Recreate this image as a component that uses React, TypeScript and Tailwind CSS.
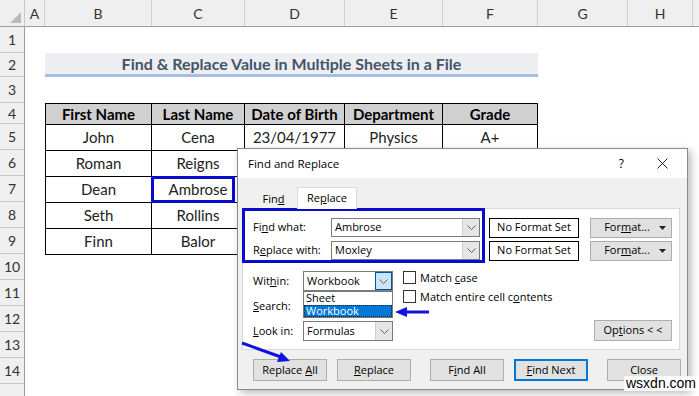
import React from "react";

const sheetFont = { fontFamily: "Lato, 'Liberation Sans', sans-serif" };
const uiFont = { fontFamily: "'Open Sans', 'Noto Sans', sans-serif" };

const cols = [
  { l: "A", w: "w-[20px]" },
  { l: "B", w: "w-[107px]" },
  { l: "C", w: "w-[93px]" },
  { l: "D", w: "w-[100px]" },
  { l: "E", w: "w-[98px]" },
  { l: "F", w: "w-[95px]" },
  { l: "G", w: "w-[90px]" },
  { l: "H", w: "w-[65px]" },
];

const rowHeights = [
  "h-[26px]",
  "h-[24px]",
  "h-[26px]",
  "h-[21px]",
  "h-[26px]",
  "h-[26px]",
  "h-[26px]",
  "h-[26px]",
  "h-[26px]",
  "h-[26px]",
  "h-[26px]",
  "h-[26px]",
  "h-[26px]",
  "h-[26px]",
];

const headers = ["First Name", "Last Name", "Date of Birth", "Department", "Grade"];
// cells hidden behind the dialog are left empty
const data = [
  ["John", "Cena", "23/04/1977", "Physics", "A+"],
  ["Roman", "Reigns", "", "", ""],
  ["Dean", "Ambrose", "", "", ""],
  ["Seth", "Rollins", "", "", ""],
  ["Finn", "Balor", "", "", ""],
];
const tcols = ["w-[106px]", "w-[93px]", "w-[100px]", "w-[98px]", "w-[95px]"];

function Chevron() {
  return (
    <svg width="9" height="5" viewBox="0 0 9 5">
      <path d="M0.5 0.5 L4.5 4.5 L8.5 0.5" fill="none" stroke="#606060" strokeWidth="1" />
    </svg>
  );
}

function Combo({ value, w, pressed }: { value: string; w: string; pressed?: boolean }) {
  return (
    <div className={`relative flex h-[20px] ${w} items-stretch border border-[#7a7a7a] bg-white`}>
      <div className="flex flex-1 items-center pl-[3px] text-black">{value}</div>
      {pressed ? (
        <div className="flex w-[17px] items-center justify-center border border-[#005499] bg-[#cce4f7]">
          <Chevron />
        </div>
      ) : (
        <div className="flex w-[17px] items-center justify-center border-l border-[#cfcfcf] bg-[#e6e6e6]">
          <Chevron />
        </div>
      )}
    </div>
  );
}

function Btn({ children, w, primary }: { children: React.ReactNode; w: string; primary?: boolean }) {
  return (
    <div
      className={`flex h-[22px] ${w} items-center justify-center bg-[#e1e1e1] ${
        primary ? "border-2 border-[#0078d7]" : "border border-[#adadad]"
      }`}
    >
      {children}
    </div>
  );
}

function Check({ children }: { children: React.ReactNode }) {
  return (
    <div className="flex h-[13px] items-center">
      <div className="h-[13px] w-[13px] border border-[#333] bg-white" />
      <div className="ml-[4px] leading-none">{children}</div>
    </div>
  );
}

function FormatBtn() {
  return (
    <div className="ml-[11px] flex h-[20px] w-[82px] items-center border border-[#adadad] bg-[#e1e1e1]">
      <div className="flex-1 pl-[8px] text-center">
        For<span className="underline">m</span>at...
      </div>
      <svg width="7" height="4" viewBox="0 0 7 4" className="mr-[5px] ml-[4px]">
        <path d="M0 0 L7 0 L3.5 4 Z" fill="#222" />
      </svg>
    </div>
  );
}

function Dialog() {
  return (
    <div
      className="absolute left-[237px] top-[148px] flex h-[242px] w-[451px] flex-col border border-[#8a8a8a] bg-[#f0f0f0] text-[11px] text-black shadow-[3px_3px_8px_rgba(0,0,0,0.28)]"
      style={uiFont}
    >
      {/* title bar */}
      <div className="flex h-[29px] items-center bg-white pl-[10px] text-[11.5px]">
        <div className="flex-1">Find and Replace</div>
        <div className="mr-[33px] text-[12px]">?</div>
        <svg width="11" height="11" viewBox="0 0 11 11" className="mr-[19px]">
          <path d="M0.5 0.5 L10.5 10.5 M10.5 0.5 L0.5 10.5" stroke="#222" strokeWidth="1" />
        </svg>
      </div>
      {/* tabs */}
      <div className="mt-[9px] flex h-[21px] items-end pl-[12px]">
        <div className="flex h-[18px] w-[47px] items-center justify-center">
          <span>
            Fin<span className="underline">d</span>
          </span>
        </div>
        <div className="relative z-10 mb-[-1px] flex h-[22px] w-[60px] items-center justify-center border border-b-0 border-[#d9d9d9] bg-white">
          <span>
            Re<span className="underline">p</span>lace
          </span>
        </div>
      </div>
      {/* panel */}
      <div className="relative ml-[4px] h-[142px] w-[438px] border border-[#d9d9d9] bg-white pl-[10px] pr-[7px] pt-[8px]">
        <div className="flex h-[21px] items-center">
          <div className="w-[78px]">
            Fi<span className="underline">n</span>d what:
          </div>
          <div className="relative flex h-[19px] w-[149px] items-stretch border border-[#7a7a7a] bg-white">
            <div className="flex flex-1 items-center pl-[3px]">Ambrose</div>
            <div className="flex w-[17px] items-center justify-center border-l border-[#cfcfcf] bg-[#e6e6e6]">
              <Chevron />
            </div>
          </div>
          <div className="ml-[9px] flex h-[20px] w-[90px] items-center justify-center border border-black bg-white">
            No Format Set
          </div>
          <FormatBtn />
        </div>
        <div className="mt-[2px] flex h-[21px] items-center">
          <div className="w-[78px]">
            R<span className="underline">e</span>place with:
          </div>
          <div className="relative flex h-[19px] w-[149px] items-stretch border border-[#7a7a7a] bg-white">
            <div className="flex flex-1 items-center pl-[3px]">Moxley</div>
            <div className="flex w-[17px] items-center justify-center border-l border-[#cfcfcf] bg-[#e6e6e6]">
              <Chevron />
            </div>
          </div>
          <div className="ml-[9px] flex h-[20px] w-[90px] items-center justify-center border border-black bg-white">
            No Format Set
          </div>
          <FormatBtn />
        </div>

        <div className="mt-[10px] flex">
          <div className="flex w-[140px] flex-col">
            <div className="flex h-[20px] items-center">
              <div className="w-[50px]">
                Wit<span className="underline">h</span>in:
              </div>
              <div className="relative">
                <Combo value="Workbook" w="w-[90px]" pressed />
                <div className="absolute left-0 top-[20px] z-20 flex h-[27px] w-[90px] flex-col border border-[#7a7a7a] bg-white leading-[12px]">
                  <div className="h-[13px] pl-[2px]">Sheet</div>
                  <div className="h-[12px] border border-dotted border-[#222] bg-[#0078d7] pl-[1px] leading-[10px] text-white">
                    Workbook
                  </div>
                </div>
              </div>
            </div>
            <div className="mt-[5px] flex h-[20px] items-center">
              <div className="w-[50px]">
                <span className="underline">S</span>earch:
              </div>
              <div className="h-[20px] w-[90px] border border-[#7a7a7a] bg-white" />
            </div>
            <div className="mt-[5px] flex h-[20px] items-center">
              <div className="w-[50px]">
                <span className="underline">L</span>ook in:
              </div>
              <Combo value="Formulas" w="w-[90px]" />
            </div>
          </div>
          <div className="ml-[10px] flex flex-1 flex-col">
            <Check>
              Match <span className="underline">c</span>ase
            </Check>
            <div className="mt-[6px]">
              <Check>
                Match entire cell c<span className="underline">o</span>ntents
              </Check>
            </div>
            <div className="mt-[17px] flex justify-end">
              <div className="flex h-[21px] w-[78px] items-center justify-center border border-[#adadad] bg-[#e1e1e1]">
                Op<span className="underline">t</span>ions &lt; &lt;
              </div>
            </div>
          </div>
        </div>
        {/* annotation box */}
        <div className="pointer-events-none absolute left-[-1px] top-[-1px] h-[55px] w-[243px] border-[3px] border-[#0a0ad0]" />
      </div>
      {/* bottom buttons */}
      <div className="mt-[9px] flex pl-[15px]">
        <Btn w="w-[74px]">
          Replace <span className="ml-[3px] underline">A</span>ll
        </Btn>
        <div className="ml-[10px]">
          <Btn w="w-[74px]">
            <span className="underline">R</span>eplace
          </Btn>
        </div>
        <div className="ml-[19px]">
          <Btn w="w-[74px]">
            F<span className="underline">i</span>nd All
          </Btn>
        </div>
        <div className="ml-[10px]">
          <Btn w="w-[74px]" primary>
            <span className="underline">F</span>ind Next
          </Btn>
        </div>
        <div className="ml-[19px]">
          <Btn w="w-[74px]">Close</Btn>
        </div>
      </div>
    </div>
  );
}

export default function App() {
  return (
    <div className="relative h-[396px] w-[699px] overflow-hidden bg-white" style={sheetFont}>
      {/* column header */}
      <div className="flex h-[27px] border-b border-[#9e9e9e] bg-[#efefef] text-[14px] text-[#333]">
        <div className="relative w-[25px] border-r border-[#c8c8c8]">
          <svg width="11" height="11" viewBox="0 0 11 11" className="absolute bottom-[3px] right-[3px]">
            <path d="M11 0 L11 11 L0 11 Z" fill="#b9b9b9" />
          </svg>
        </div>
        {cols.map((c) => (
          <div key={c.l} className={`${c.w} flex items-center justify-center border-r border-[#d0d0d0]`}>
            {c.l}
          </div>
        ))}
        <div className="flex-1" />
      </div>
      <div className="flex">
        {/* row header */}
        <div className="flex w-[25px] flex-col border-r border-[#9e9e9e] bg-[#efefef] text-[14px] text-[#333]">
          {rowHeights.map((h, i) => (
            <div key={i} className={`${h} flex items-center justify-center border-b border-[#c8c8c8]`}>
              {i + 1}
            </div>
          ))}
          <div className="h-[20px]" />
        </div>
        {/* sheet body */}
        <div className="flex flex-col pl-[20px] text-[15px] text-[#222]">
          <div className="h-[26px]" />
          <div className="flex h-[24px] w-[493px] items-center justify-center border-b-[3px] border-[#a4bfdf] bg-[#eceef1] pt-[1px] text-[16px] font-bold text-[#44546a]">
            Find &amp; Replace Value in Multiple Sheets in a File
          </div>
          <div className="h-[26px]" />
          <div className="flex flex-col border-l border-t border-black">
            <div className="flex">
              {headers.map((h, i) => (
                <div
                  key={h}
                  className={`${tcols[i]} flex h-[21px] items-center justify-center border-b border-r border-black bg-[#d0d0d0] font-bold text-black`}
                >
                  {h}
                </div>
              ))}
            </div>
            {data.map((r, ri) => (
              <div key={ri} className="flex">
                {r.map((v, i) => (
                  <div
                    key={i}
                    className={`${tcols[i]} flex h-[26px] items-center justify-center border-b border-r border-black`}
                  >
                    {v}
                  </div>
                ))}
              </div>
            ))}
          </div>
        </div>
      </div>

      {/* Ambrose highlight */}
      <div className="pointer-events-none absolute left-[151px] top-[176px] h-[27px] w-[84px] border-[3px] border-[#0a0ad0]" />

      <Dialog />

      {/* arrows */}
      <svg className="pointer-events-none absolute left-0 top-0" width="699" height="396" viewBox="0 0 699 396">
        <line x1="429" y1="312" x2="404" y2="312" stroke="#1111e0" strokeWidth="3" />
        <path d="M395 312 L407 307 L407 317 Z" fill="#1111e0" />
        <line x1="242" y1="343" x2="281" y2="357" stroke="#1111e0" strokeWidth="3" />
        <path d="M290 361 L277 362 L281 352 Z" fill="#1111e0" />
      </svg>

      {/* watermark */}
      <div
        className="absolute left-[624px] top-[376px] bg-white/90 px-[2px] text-[14px] leading-[15px] text-black"
        style={{ fontFamily: "'Liberation Sans', sans-serif" }}
      >
        wsxdn.com
      </div>
    </div>
  );
}
